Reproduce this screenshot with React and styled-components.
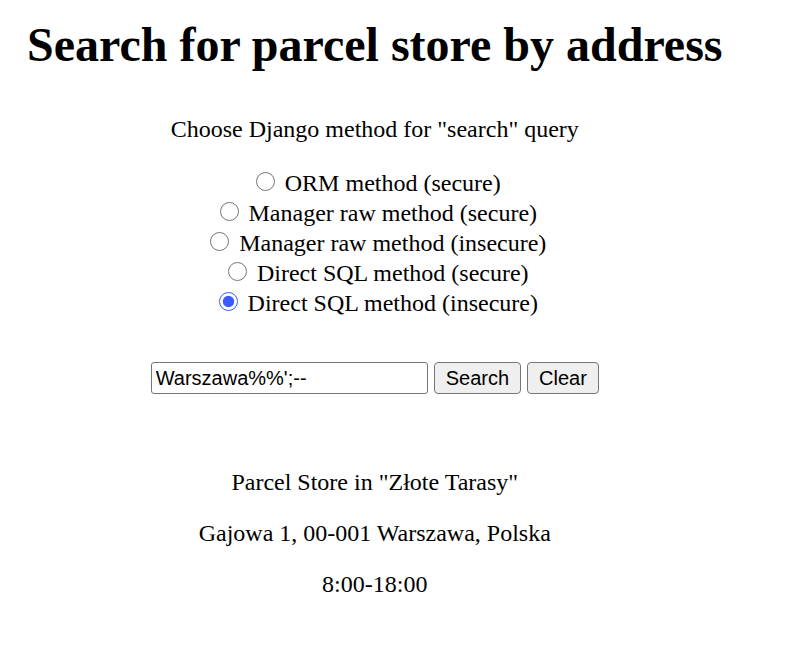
import { useState } from "react"
import styled, { createGlobalStyle } from "styled-components"

const methods = [
  { id: "orm", label: "ORM method (secure)" },
  { id: "raw", label: "Manager raw method (secure)" },
  { id: "raw_insecure", label: "Manager raw method (insecure)" },
  { id: "sql", label: "Direct SQL method (secure)" },
  { id: "sql_insecure", label: "Direct SQL method (insecure)" }
]

const stores = [
  {
    name: 'Parcel Store in "Złote Tarasy"',
    address: "Gajowa 1, 00-001 Warszawa, Polska",
    hours: "8:00-18:00"
  }
]

function App() {
  const [method, setMethod] = useState("sql_insecure")
  const [query, setQuery] = useState("Warszawa%%';--")

  return (
    <>
      <GlobalStyle />
      <Page>
        <Title>Search for parcel store by address</Title>

        <Form onSubmit={(e) => e.preventDefault()}>
          <Prompt>Choose Django method for "search" query</Prompt>

          <Methods>
            {methods.map((m) => (
              <MethodLabel key={m.id}>
                <Radio
                  type='radio'
                  name='method'
                  value={m.id}
                  checked={method === m.id}
                  onChange={() => setMethod(m.id)}
                />{" "}
                {m.label}
              </MethodLabel>
            ))}
          </Methods>

          <SearchRow>
            <SearchInput
              type='text'
              value={query}
              onChange={(e) => setQuery(e.target.value)}
            />
            <Button type='submit'>Search</Button>
            <Button type='button' onClick={() => setQuery("")}>
              Clear
            </Button>
          </SearchRow>
        </Form>

        <Results>
          {stores.map((store) => (
            <div key={store.name}>
              <ResultLine>{store.name}</ResultLine>
              <ResultLine>{store.address}</ResultLine>
              <ResultLine>{store.hours}</ResultLine>
            </div>
          ))}
        </Results>
      </Page>
    </>
  )
}

const GlobalStyle = createGlobalStyle`
  body {
    margin: 0;
    background: #fff;
    color: #000;
    font-family: "Liberation Serif", "Times New Roman", serif;
  }
`

const Page = styled.div`
  width: fit-content;
  padding: 17px 27px 0;
  text-align: center;
`

const Title = styled.h1`
  margin: 0;
  font-size: 48px;
  line-height: 55px;
  font-weight: bold;
  text-align: left;
  white-space: nowrap;
`

const Form = styled.form`
  margin: 0;
`

const Prompt = styled.p`
  margin: 44px 0 25px;
  font-size: 24px;
  line-height: 27px;
`

const Methods = styled.div`
  display: flex;
  flex-direction: column;
`

const MethodLabel = styled.label`
  display: block;
  height: 30px;
  font-size: 24px;
  line-height: 30px;
`

const Radio = styled.input`
  width: 19px;
  height: 19px;
  margin: 4px 4px 0 7px;
  vertical-align: baseline;
  accent-color: #3b5bff;
`

const SearchRow = styled.div`
  display: flex;
  justify-content: center;
  gap: 6px;
  margin-top: 44px;
`

const SearchInput = styled.input`
  box-sizing: border-box;
  width: 277px;
  height: 32px;
  padding: 1px 4px;
  font-family: "Liberation Sans", Arial, sans-serif;
  font-size: 20px;
  color: #000;
  border: 1px solid #767676;
  border-radius: 3px;
`

const Button = styled.button`
  box-sizing: border-box;
  height: 32px;
  padding: 0 11px;
  font-family: "Liberation Sans", Arial, sans-serif;
  font-size: 20px;
  color: #000;
  background: #efefef;
  border: 1px solid #767676;
  border-radius: 4px;
`

const Results = styled.div`
  margin-top: 75px;
`

const ResultLine = styled.p`
  margin: 0 0 24px;
  font-size: 24px;
  line-height: 27px;
`

export default App
